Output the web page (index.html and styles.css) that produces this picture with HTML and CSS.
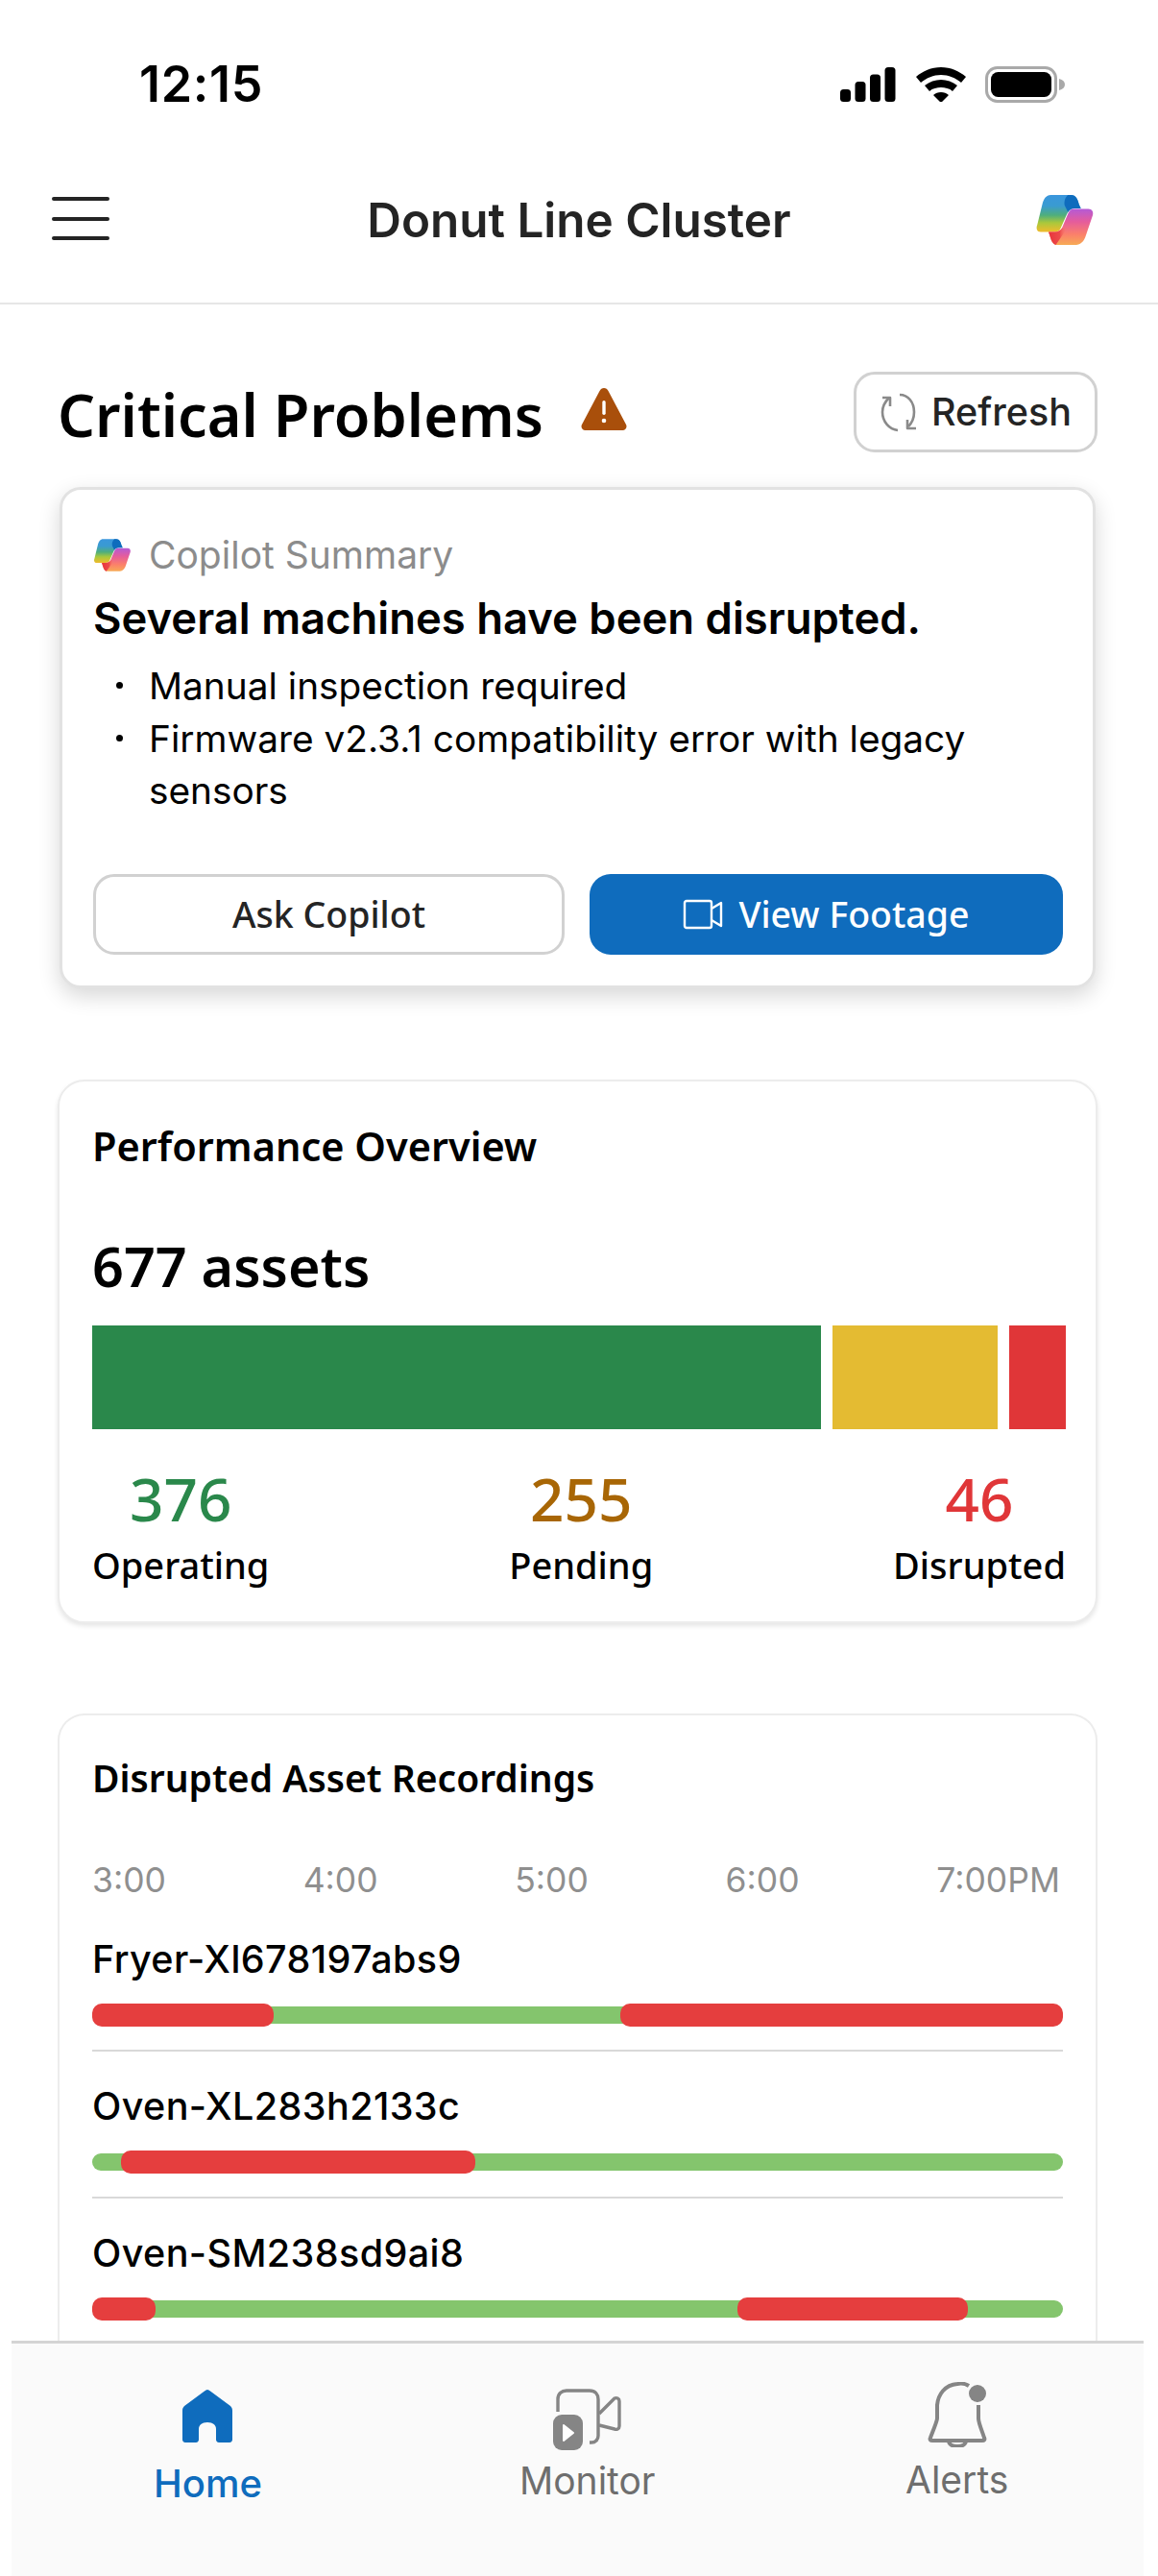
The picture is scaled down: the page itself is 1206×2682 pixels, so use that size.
FILE: index.html
```html
<!DOCTYPE html>
<html lang="en">
<head>
<meta charset="utf-8">
<title>Donut Line Cluster</title>
<link rel="stylesheet" href="styles.css">
</head>
<body>
<svg class="defs" width="0" height="0" aria-hidden="true">
  <defs>
    <linearGradient id="copA" x1="0" y1="0" x2="0" y2="1">
      <stop offset="0" stop-color="#3a96dd"/><stop offset=".3" stop-color="#3a9bd0"/>
      <stop offset=".55" stop-color="#4fae7c"/><stop offset=".75" stop-color="#a8c83c"/><stop offset="1" stop-color="#f0bb2c"/>
    </linearGradient>
    <linearGradient id="copB" x1="0" y1="0" x2="0" y2="1">
      <stop offset="0" stop-color="#b45ad6"/><stop offset=".35" stop-color="#e55c9c"/>
      <stop offset=".7" stop-color="#fb7f6b"/><stop offset="1" stop-color="#f7ab55"/>
    </linearGradient>
    <linearGradient id="copR" x1="0" y1="0" x2="1" y2="0">
      <stop offset="0" stop-color="#e8343c"/><stop offset=".6" stop-color="#ec4a4a"/><stop offset="1" stop-color="#fb7f6b" stop-opacity="0"/>
    </linearGradient>
    <symbol id="copilot" viewBox="110 60 190 170">
      <path d="M160 65H225C240 65 247 80 250 95L256 108H235C222 108 215 118 210 130L190 175C187 181 180 183 172 183H128C116 183 112 172 117 160L133 95C137 78 145 65 160 65Z" fill="url(#copA)"/>
      <path d="M215 65H225C240 65 247 80 250 95L256 108H235C226 108 220 112 215 120L205 100C201 88 206 72 215 65Z" fill="#0f6cbd"/>
      <path d="M232 110H280C292 110 297 120 294 130L272 195C266 215 255 225 235 225H182C170 225 163 215 160 205L153 183H172C185 183 192 178 196 170L215 125C220 115 225 110 232 110Z" fill="url(#copB)"/>
      <path d="M153 183H172C185 183 192 178 196 170L212 172 176 225C170 224 163 215 160 205Z" fill="url(#copR)"/>
    </symbol>
  </defs>
</svg>
<div class="phone">
  <div class="status">
    <span class="time">12:15</span>
    <div class="status-icons">
      <svg class="ic-signal" viewBox="0 0 58 36" width="58" height="36"><g fill="#000"><rect x="0" y="23" width="11" height="13" rx="3.5"/><rect x="15.500" y="15" width="11" height="21" rx="3.500"/><rect x="31" y="7.500" width="11" height="28.500" rx="3.500"/><rect x="46.500" y="0" width="11" height="36" rx="3.500"/></g></svg>
      <svg class="ic-wifi" viewBox="0 0 52 36" width="52" height="36"><path d="M26 0c10 0 19 4 26 10l-5 6C41 11 34 8 26 8S11 11 5 16l-5-6C7 4 16 0 26 0zm0 13c6 0 12 2 17 6l-5 6c-3-3-8-4-12-4s-9 1-12 4l-5-6c5-4 11-6 17-6zm0 13c3 0 6 1 8 3l-8 8-8-8c2-2 5-3 8-3z" fill="#000"/></svg>
      <svg class="ic-batt" viewBox="0 0 84 38" width="84" height="38"><rect x="1.500" y="1.500" width="72" height="35" rx="11" fill="none" stroke="#a9a9a9" stroke-width="3"/><rect x="6" y="6" width="63" height="26" rx="7.500" fill="#000"/><path d="M77 13c4 1 6 3 6 6s-2 5-6 6z" fill="#a9a9a9"/></svg>
    </div>
  </div>
  <header class="appbar">
    <button class="menu" aria-label="Menu"><span></span><span></span><span></span></button>
    <h1 class="app-title">Donut Line Cluster</h1>
    <svg class="logo-lg"><use href="#copilot"/></svg>
  </header>
  <main class="content">
    <div class="section-head">
      <h2 class="section-title">Critical Problems</h2>
      <svg class="ic-warn" viewBox="0 0 48 46"><path d="M24 1c2 0 3.500 1 4.500 3l18.500 35c1.500 3-.5 6-3.500 6h-39C1.500 45-.5 42 1 39L19.500 4C20.500 2 22 1 24 1z" fill="#a94f0b"/><rect x="22.300" y="14" width="3.400" height="15" rx="1.700" fill="#fff"/><circle cx="24" cy="35" r="2.300" fill="#fff"/></svg>
      <button class="refresh">
        <svg viewBox="0 0 40 42" width="40" height="42" fill="none" stroke="#8a8a8a" stroke-width="2.600"><path d="M21 3c9 0 15 8 15 18 0 6-2 11-6 15"/><path d="M19 40C10 39 3 31 3 21 3 15 6 10 10 6"/><path d="M3 6h8v9" stroke-linejoin="round"/><path d="M38 38h-9v-9" stroke-linejoin="round"/></svg>
        <span>Refresh</span>
      </button>
    </div>

    <section class="summary">
      <div class="summary-head">
        <svg class="logo-sm"><use href="#copilot"/></svg>
        <span>Copilot Summary</span>
      </div>
      <h3 class="summary-title">Several machines have been disrupted.</h3>
      <ul class="summary-list">
        <li>Manual inspection required</li>
        <li>Firmware v2.3.1 compatibility error with legacy sensors</li>
      </ul>
      <div class="summary-actions">
        <button class="btn btn-outline">Ask Copilot</button>
        <button class="btn btn-primary">
          <svg viewBox="0 0 42 32" width="42" height="32" fill="none" stroke="#fff" stroke-width="2.400" stroke-linejoin="round"><path d="M4 2h24c1 0 2 1 2 2v24c0 1-1 2-2 2H4c-1 0-2-1-2-2V4c0-1 1-2 2-2z"/><path d="M30 10l10-6v24l-10-6"/></svg>
          <span>View Footage</span>
        </button>
      </div>
    </section>

    <section class="card perf">
      <h3 class="card-title">Performance Overview</h3>
      <div class="asset-count">677 assets</div>
      <div class="stack">
        <div class="seg seg-green"></div>
        <div class="seg seg-yellow"></div>
        <div class="seg seg-red"></div>
      </div>
      <div class="stats">
        <div class="stat"><span class="stat-num num-green">376</span><span class="stat-label">Operating</span></div>
        <div class="stat"><span class="stat-num num-amber">255</span><span class="stat-label">Pending</span></div>
        <div class="stat"><span class="stat-num num-red">46</span><span class="stat-label">Disrupted</span></div>
      </div>
    </section>

    <section class="card rec">
      <h3 class="rec-title">Disrupted Asset Recordings</h3>
      <div class="hours"><span>3:00</span><span>4:00</span><span>5:00</span><span>6:00</span><span>7:00PM</span></div>
      <div class="rec-row">
        <div class="rec-name">Fryer-Xl678197abs9</div>
        <div class="track">
          <i class="blip" style="left:0;width:18.700%"></i>
          <i class="blip" style="left:54.400%;width:45.600%"></i>
        </div>
      </div>
      <div class="rec-row">
        <div class="rec-name">Oven-XL283h2133c</div>
        <div class="track">
          <i class="blip" style="left:3%;width:36.500%"></i>
        </div>
      </div>
      <div class="rec-row">
        <div class="rec-name">Oven-SM238sd9ai8</div>
        <div class="track">
          <i class="blip" style="left:0;width:6.500%"></i>
          <i class="blip" style="left:66.500%;width:23.700%"></i>
        </div>
      </div>
    </section>
  </main>
  <nav class="tabbar">
    <a class="tab tab-home">
      <svg viewBox="0 0 56 56" width="56" height="56"><path d="M28 1c1 0 2 .5 3 1.500L52 18c1.500 1.500 2 3 2 5V53c0 1.500-1 3-3 3H40c-2 0-3-1.500-3-3V42c0-4-3-7-9-7s-9 3-9 7v11c0 1.500-1 3-3 3H5c-2 0-3-1.500-3-3V23c0-2 .5-3.500 2-5L25 2.500C26 1.500 27 1 28 1z" fill="#0f6cbd"/></svg>
      <span>Home</span>
    </a>
    <a class="tab tab-monitor">
      <svg viewBox="0 0 72 64" width="72" height="64" fill="none" stroke="#858585" stroke-width="3.400"><path d="M5 24V11C5 5 9 2 14 2h24c6 0 9 4 9 9v38c0 4-3 7-7 7h-2"/><path d="M48 26l16-16c2-1 5 0 5 3v26c0 3-3 4-5 3L48 38" stroke-linejoin="round"/><rect x="0" y="27" width="31" height="37" rx="9" fill="#858585" stroke="none"/><path d="M11 38l10 8-10 8z" fill="#fff" stroke="#fff" stroke-width="2" stroke-linejoin="round"/></svg>
      <span>Monitor</span>
    </a>
    <a class="tab tab-alerts">
      <svg viewBox="0 0 64 68" width="64" height="68" fill="none" stroke="#858585" stroke-width="4"><path d="M44 4c-3-2-7-3-12-2C19 3 12 13 11 24v14c0 3-6 17-7 20-1 2 0 3 2 3h52c2 0 3-1 2-3-1-4-6-15-6-20V24"/><path d="M23 61c0 4 4 6 9 6s9-2 9-6"/><circle cx="53" cy="12" r="9" fill="#858585" stroke="none"/></svg>
      <span>Alerts</span>
    </a>
  </nav>
</div>
</body>
</html>
```
FILE: styles.css
```css
* { box-sizing: border-box; }
html, body { margin: 0; padding: 0; background: #fff; }
.defs { position: absolute; }
.phone {
  width: 1206px; height: 2682px; overflow: hidden;
  display: flex; flex-direction: column;
  font-family: Inter, "Liberation Sans", sans-serif; color: #000;
}
h1, h2, h3, ul { margin: 0; padding: 0; }
button { font: inherit; background: none; border: 0; padding: 0; color: inherit; }

.status { height: 175px; flex: none; display: flex; align-items: center; justify-content: space-between; padding: 0 96px 0 145px; }
.time { font-size: 52px; font-weight: 600; line-height: 60px; letter-spacing: .7px; }
.status-icons { display: flex; align-items: center; gap: 20px; }
.ic-signal { margin-right: 1px; }

.appbar { height: 142px; flex: none; display: flex; align-items: flex-start; justify-content: space-between; padding: 24px 66px 0 54px; border-bottom: 2px solid #e6e6e6; }
.menu { width: 60px; margin-top: 6px; display: flex; flex-direction: column; gap: 16.500px; }
.menu span { height: 4px; border-radius: 2px; background: #242424; }
.app-title { font-size: 49.400px; font-weight: 600; color: #242424; line-height: 60px; margin-left: 14px; }
.logo-lg { width: 62px; height: 56px; margin-top: 2px; }

.content { flex: 1; min-height: 0; overflow: hidden; padding: 70px 63px 0 60px; }
.section-head { display: flex; align-items: center; height: 84px; }
.section-title { font-family: "Noto Sans", sans-serif; font-size: 61.200px; font-weight: 600; line-height: 84px; margin-top: 6px; }
.ic-warn { width: 48px; height: 46px; margin-left: 39px; margin-top: -6px; }
.refresh { margin-left: auto; width: 254px; height: 84px; border: 3px solid #d1d1d1; border-radius: 22px; display: flex; align-items: center; justify-content: center; gap: 14px; font-size: 39.500px; font-weight: 500; color: #242424; }

.summary { margin: 36px 2px 0; height: 522px; background: #fff; border: 3px solid #e2e2e2; border-radius: 22px; box-shadow: 0 8px 22px rgba(0,0,0,.16); padding: 42px 31px 0 32px; }
.summary-head { display: flex; align-items: center; gap: 18px; font-size: 39px; color: #8c8c8c; line-height: 52px; }
.logo-sm { width: 40px; height: 36px; }
.summary-title { margin-top: 10px; font-size: 45.400px; font-weight: 600; line-height: 60px; }
.summary-list { list-style: none; margin-top: 13px; font-size: 38.800px; line-height: 54.500px; }
.summary-list li { position: relative; padding-left: 58px; }
.summary-list li::before { content: ""; position: absolute; left: 24px; top: 23px; width: 7px; height: 7px; border-radius: 50%; background: #000; }
.summary-actions { display: grid; grid-template-columns: 491px 493px; gap: 26px; margin-top: 59px; }
.btn { height: 84px; border-radius: 22px; display: flex; align-items: center; justify-content: center; gap: 16px; font-family: "Noto Sans", sans-serif; font-size: 37.500px; font-weight: 500; }
.btn-outline { border: 3px solid #d1d1d1; color: #242424; }
.btn-primary { background: #0f6cbd; color: #fff; }

.card { background: #fff; border: 2px solid #ececec; border-radius: 28px; padding: 0 31px 0 34px; }
.perf { margin-top: 95px; height: 566px; box-shadow: 0 3px 5px rgba(0,0,0,.1); }
.card-title { margin-top: 37px; font-family: "Noto Sans", sans-serif; font-size: 41.500px; font-weight: 600; line-height: 60px; }
.asset-count { margin-top: 55px; font-family: "Noto Sans", sans-serif; font-size: 57.500px; font-weight: 600; line-height: 80px; }
.stack { display: flex; gap: 12px; margin-top: 22px; height: 108px; }
.seg-green { width: 759px; background: #2a884b; }
.seg-yellow { width: 172px; background: #e4bb32; }
.seg-red { flex: 1; background: #e03638; }
.stats { display: flex; justify-content: space-between; margin-top: 38px; font-family: "Noto Sans", sans-serif; }
.stat { display: flex; flex-direction: column; align-items: center; gap: 5px; }
.stat-num { font-size: 62px; font-weight: 500; line-height: 68px; }
.stat-label { font-size: 38px; font-weight: 500; line-height: 60px; }
.num-green { color: #2a884b; }
.num-amber { color: #a86605; }
.num-red { color: #e03638; }

.rec { margin-top: 94px; padding-top: 35px; height: 720px; border-bottom: 0; }
.rec-title { font-family: "Noto Sans", sans-serif; font-size: 39px; font-weight: 600; line-height: 60px; }
.hours { display: flex; justify-content: space-between; margin-top: 52px; padding-right: 6px; font-size: 35.500px; color: #8f8f8f; line-height: 50px; }
.rec-row { padding-top: 32px; margin-right: 3px; }
.rec-row + .rec-row { border-top: 2px solid #d9d9d9; margin-top: 27px; }
.rec-name { font-size: 39.500px; font-weight: 500; line-height: 50px; letter-spacing: .4px; }
.track { position: relative; height: 18px; margin-top: 24px; border-radius: 9px; background: #84c56d; }
.blip { position: absolute; top: -3px; height: 24px; border-radius: 10px; background: #e53e3e; }

.tabbar { flex: none; height: 245px; margin: 0 15px 0 12px; background: #fafafa; border-top: 3px solid #d4d4d4; display: block; position: relative; }
.tab { position: absolute; display: flex; flex-direction: column; align-items: center; font-size: 39px; color: #6e6e6e; }
.tab-home { left: 148px; top: 47px; color: #0f6cbd; font-size: 40px; font-weight: 500; gap: 18px; }
.tab-monitor { left: 529px; top: 47px; gap: 8px; }
.tab-alerts { left: 931px; top: 40px; gap: 10px; }
```
